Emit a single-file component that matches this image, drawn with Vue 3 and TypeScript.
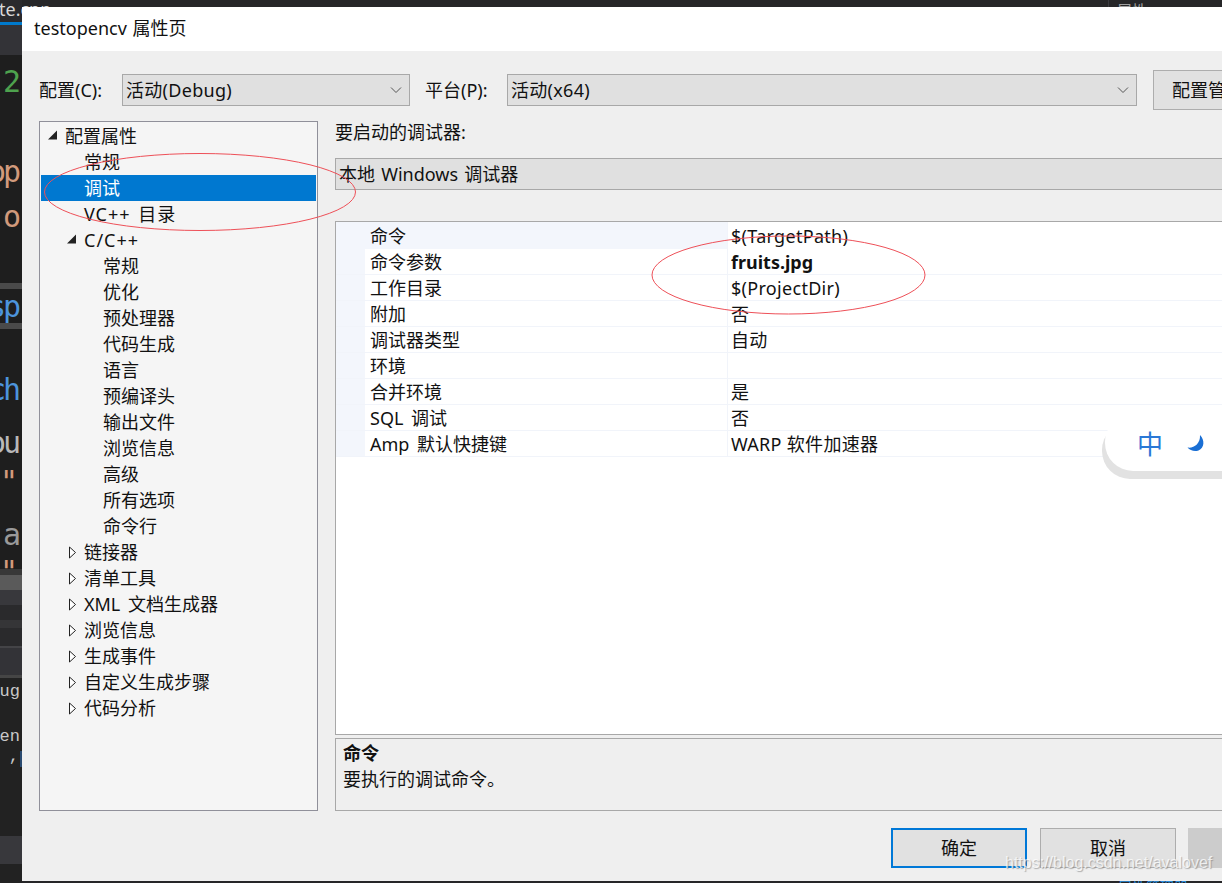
<script setup lang="ts">
type TreeItem = { label: string; depth: 0 | 1 | 2; arrow?: 'open' | 'closed'; selected?: boolean }
type GridRow = { name: string; value: string; bold?: boolean }
type Band = { h: number; bg: string; text?: string; color?: string; cls?: string }

const tree: TreeItem[] = [
  { label: '配置属性', depth: 0, arrow: 'open' },
  { label: '常规', depth: 1 },
  { label: '调试', depth: 1, selected: true },
  { label: 'VC++ 目录', depth: 1 },
  { label: 'C/C++', depth: 1, arrow: 'open' },
  { label: '常规', depth: 2 },
  { label: '优化', depth: 2 },
  { label: '预处理器', depth: 2 },
  { label: '代码生成', depth: 2 },
  { label: '语言', depth: 2 },
  { label: '预编译头', depth: 2 },
  { label: '输出文件', depth: 2 },
  { label: '浏览信息', depth: 2 },
  { label: '高级', depth: 2 },
  { label: '所有选项', depth: 2 },
  { label: '命令行', depth: 2 },
  { label: '链接器', depth: 1, arrow: 'closed' },
  { label: '清单工具', depth: 1, arrow: 'closed' },
  { label: 'XML 文档生成器', depth: 1, arrow: 'closed' },
  { label: '浏览信息', depth: 1, arrow: 'closed' },
  { label: '生成事件', depth: 1, arrow: 'closed' },
  { label: '自定义生成步骤', depth: 1, arrow: 'closed' },
  { label: '代码分析', depth: 1, arrow: 'closed' },
]

const rows: GridRow[] = [
  { name: '命令', value: '$(TargetPath)' },
  { name: '命令参数', value: 'fruits.jpg', bold: true },
  { name: '工作目录', value: '$(ProjectDir)' },
  { name: '附加', value: '否' },
  { name: '调试器类型', value: '自动' },
  { name: '环境', value: '' },
  { name: '合并环境', value: '是' },
  { name: 'SQL 调试', value: '否' },
  { name: 'Amp 默认快捷键', value: 'WARP 软件加速器' },
]

const dark = '#1e1e1e'
const low = '#222222'
const orange = '#d19a7c'
const blue = '#4d94dc'

// strip of the editor window that shows left of the dialog
const bands: Band[] = [
  { h: 22, bg: '#2a2a2d' },
  { h: 3, bg: '#007acc' },
  { h: 30, bg: '#333337' },
  { h: 13, bg: dark },
  { h: 30, bg: dark, text: '2', color: '#4ea24e', cls: 'big' },
  { h: 60, bg: dark },
  { h: 30, bg: dark, text: 'op', color: orange, cls: 'big' },
  { h: 15, bg: dark },
  { h: 30, bg: dark, text: 'o', color: orange, cls: 'big' },
  { h: 50, bg: dark },
  { h: 6, bg: '#4a4a4a' },
  { h: 4, bg: dark },
  { h: 30, bg: dark, text: 'sp', color: blue, cls: 'big' },
  { h: 6, bg: '#4a4a4a' },
  { h: 47, bg: dark },
  { h: 30, bg: dark, text: 'ch', color: blue, cls: 'big' },
  { h: 23, bg: dark },
  { h: 30, bg: dark, text: 'ou', color: '#b9b9b9', cls: 'big' },
  { h: 9, bg: dark },
  { h: 30, bg: dark, text: '"', color: orange, cls: 'big quote' },
  { h: 23, bg: dark },
  { h: 30, bg: dark, text: 'a', color: '#9a9a9a', cls: 'big' },
  { h: 7, bg: dark },
  { h: 11, bg: dark, text: '"', color: orange, cls: 'big quote' },
  { h: 6, bg: '#383838' },
  { h: 15, bg: '#5a5a5a' },
  { h: 15, bg: '#38383c' },
  { h: 15, bg: '#2a2a2c' },
  { h: 8, bg: '#353537' },
  { h: 18, bg: '#2a2a2c' },
  { h: 2, bg: '#444447' },
  { h: 27, bg: '#333337' },
  { h: 3, bg: '#454545' },
  { h: 3, bg: low },
  { h: 22, bg: low, text: 'oug', color: '#c8c8c8', cls: 'small' },
  { h: 23, bg: low },
  { h: 22, bg: low, text: 'pen', color: '#c8c8c8', cls: 'small' },
  { h: 3, bg: low },
  { h: 16, bg: low, text: ',', color: '#c8c8c8', cls: 'small comma' },
  { h: 69, bg: low },
  { h: 28, bg: '#38383c' },
  { h: 19, bg: low },
]
</script>

<template>
  <div class="desktop">
    <!-- editor window behind the dialog -->
    <div class="top-tab">te.cpp</div>
    <div class="top-right">属性</div>
    <div class="strip">
      <div v-for="(b, i) in bands" :key="i" class="band" :class="b.cls" :style="{ height: b.h + 'px', background: b.bg, color: b.color }">
        <span v-if="b.text">{{ b.text }}</span>
      </div>
    </div>

    <div class="dialog">
      <div class="title">testopencv 属性页</div>
      <div class="toolbar">
        <span class="lbl lbl-config">配置(C):</span>
        <div class="select select-config">
          <span>活动(Debug)</span>
          <svg class="chev" width="12" height="8" viewBox="0 0 12 8"><path d="M1 1.5 6 6.5 11 1.5" fill="none" stroke="#555" stroke-width="1" /></svg>
        </div>
        <span class="lbl lbl-platform">平台(P):</span>
        <div class="select select-platform">
          <span>活动(x64)</span>
          <svg class="chev" width="12" height="8" viewBox="0 0 12 8"><path d="M1 1.5 6 6.5 11 1.5" fill="none" stroke="#555" stroke-width="1" /></svg>
        </div>
        <div class="btn btn-manager">配置管理器(O)...</div>
      </div>

      <div class="main">
        <div class="tree">
          <div v-for="(t, i) in tree" :key="i" class="node" :class="['depth-' + t.depth, { selected: t.selected, plus: t.label.includes('++') }]">
            <span class="twist">
              <svg v-if="t.arrow === 'open'" width="10" height="10" viewBox="0 0 10 10"><polygon points="0,9.5 9,9.5 9,0.5" fill="#222" /></svg>
              <svg v-else-if="t.arrow === 'closed'" class="closed" width="10" height="13" viewBox="0 0 10 13"><polygon points="2.5,1 8.5,6.5 2.5,12" fill="#fff" stroke="#222" stroke-width="1" /></svg>
            </span>
            <span>{{ t.label }}</span>
          </div>
        </div>

        <div class="pane">
          <div class="pane-label">要启动的调试器:</div>
          <div class="select combo"><span>本地 Windows 调试器</span></div>
          <div class="grid">
            <div v-for="(r, i) in rows" :key="i" class="row" :class="{ current: i === 0 }">
              <div class="gutter"></div>
              <div class="name">{{ r.name }}</div>
              <div class="value" :class="{ bold: r.bold }">{{ r.value }}</div>
            </div>
          </div>
          <div class="desc">
            <div class="desc-line desc-title">命令</div>
            <div class="desc-line">要执行的调试命令。</div>
          </div>
        </div>
      </div>

      <div class="footer">
        <div class="btn btn-ok">确定</div>
        <div class="btn btn-cancel">取消</div>
        <div class="btn btn-apply"></div>
      </div>
    </div>

    <!-- hand-drawn marks on top of the screenshot -->
    <svg class="marks" width="1222" height="883" viewBox="0 0 1222 883">
      <ellipse cx="200" cy="192" rx="155.5" ry="38.5" fill="none" stroke="#ee5058" stroke-width="1" />
      <ellipse cx="788.5" cy="275" rx="136.5" ry="39" fill="none" stroke="#ee5058" stroke-width="1" />
    </svg>

    <div class="ime">
      <span class="ime-zh">中</span>
      <svg width="18" height="17" viewBox="0 0 18 17"><path d="M13 0C18 5 17.5 13 11.5 15.5C7.5 17 3 15.5 0.5 12.5C6.5 13.5 13.5 9 13 0Z" fill="#1a6fd4" /></svg>
    </div>
    <div class="watermark">https://blog.csdn.net/avalovef</div>
    <div class="bottom-frag">属性管理器</div>
  </div>
</template>

<style>
html,
body {
  margin: 0;
  overflow: hidden;
}
</style>

<style scoped>
.desktop {
  position: relative;
  width: 1222px;
  height: 883px;
  overflow: hidden;
  background: #262628;
  font-family: "Noto Sans", "Noto Sans CJK SC", sans-serif;
  font-size: 18px;
  color: #111;
}

.top-tab {
  position: absolute;
  left: -1px;
  top: -4px;
  z-index: 1;
  font-size: 18px;
  line-height: 26px;
  color: #d8d8d8;
}

.top-right {
  position: absolute;
  left: 1108px;
  top: 0;
  height: 7px;
  padding-left: 8px;
  overflow: hidden;
  font-size: 15px;
  line-height: 20px;
  color: #a0a0a0;
  border-left: 1px solid #3a3a40;
}

.strip {
  width: 22px;
  height: 883px;
  overflow: hidden;
}

.band {
  display: flex;
  justify-content: flex-end;
  overflow: hidden;
  white-space: nowrap;
  width: 22px;
  flex: none;
}

.band.big {
  font-family: "DejaVu Sans Mono", monospace;
  font-size: 30px;
  letter-spacing: -3px;
  line-height: 28px;
  padding-right: 4px;
  box-sizing: border-box;
}

.band.quote {
  padding-right: 7px;
}

.band.small {
  font-family: "Liberation Mono", monospace;
  font-size: 17px;
  line-height: 22px;
  padding-right: 2px;
  box-sizing: border-box;
}

.band.comma {
  padding-right: 3px;
  line-height: 12px;
  box-shadow: inset -2px 0 0 #2a4a70;
}

.dialog {
  position: absolute;
  left: 22px;
  top: 7px;
  z-index: 2;
  width: 1200px;
  height: 874px;
  overflow: hidden;
  background: #efefef;
}

.title {
  height: 44px;
  padding-left: 12px;
  background: #fff;
  line-height: 43px;
  word-spacing: 1px;
}

.toolbar {
  display: flex;
  align-items: center;
  height: 40px;
  margin-top: 19px;
  padding-left: 17px;
}

.lbl {
  flex: none;
  white-space: nowrap;
  padding-bottom: 2px;
}

.lbl-config {
  width: 83px;
}

.lbl-platform {
  width: 82px;
  margin-left: 15px;
}

.select {
  display: flex;
  align-items: center;
  justify-content: space-between;
  box-sizing: border-box;
  height: 32px;
  padding: 0 7px 2px 3px;
  border: 1px solid #a8a8a8;
  background: #e0e0e0;
  flex: none;
  letter-spacing: 0.3px;
}

.select-config {
  width: 288px;
}

.select-platform {
  width: 630px;
}

.chev {
  flex: none;
  margin-top: 2px;
}

.btn {
  box-sizing: border-box;
  height: 40px;
  border: 1px solid #adadad;
  background: #e1e1e1;
  line-height: 38px;
  text-align: center;
  flex: none;
}

.btn-manager {
  width: 160px;
  margin-left: 16px;
  text-align: left;
  padding-left: 18px;
  white-space: nowrap;
  overflow: hidden;
}

.main {
  display: flex;
  gap: 17px;
  margin-top: 11px;
  padding-left: 17px;
  height: 690px;
}

.tree {
  box-sizing: border-box;
  width: 279px;
  height: 690px;
  padding: 1px;
  border: 1px solid #90909a;
  background: #f5f5f5;
  flex: none;
}

.node {
  display: flex;
  align-items: center;
  height: 26px;
  line-height: 26px;
  white-space: nowrap;
  word-spacing: 3px;
}

.node.plus {
  letter-spacing: 1px;
  word-spacing: 2px;
}

.depth-0 {
  padding-left: 7px;
}

.depth-1 {
  padding-left: 26px;
}

.depth-2 {
  padding-left: 45px;
}

.node.selected {
  background: #0078d0;
  color: #fff;
}

.twist {
  display: flex;
  align-items: center;
  width: 17px;
  height: 26px;
  flex: none;
}

.twist svg {
  margin-bottom: 3px;
}

.twist svg.closed {
  margin-bottom: 0;
}

.pane {
  display: flex;
  flex-direction: column;
  width: 1000px;
  flex: none;
}

.pane-label {
  height: 37px;
  line-height: 22px;
}

.combo {
  width: 1000px;
  word-spacing: 1.5px;
  letter-spacing: 0;
}

.grid {
  box-sizing: border-box;
  height: 514px;
  margin-top: 31px;
  border: 1px solid #a8a8a8;
  background: #fff;
}

.row {
  display: flex;
  box-sizing: border-box;
  height: 26px;
  line-height: 27px;
  border-bottom: 1px solid #f1f4fa;
}

.row.current {
  height: 27px;
  line-height: 28px;
  border-bottom: none;
}

.gutter {
  width: 29px;
  background: #f3f6fc;
  flex: none;
}

.name {
  width: 363px;
  padding-left: 5px;
  box-sizing: border-box;
  flex: none;
  border-right: 1px solid #f1f4fa;
  word-spacing: 3px;
}

.row.current .name {
  background: #f3f6fc;
}

.value {
  padding-left: 3px;
  letter-spacing: 0.3px;
}

.value.bold {
  font-weight: 700;
  letter-spacing: 0;
}

.desc {
  box-sizing: border-box;
  height: 73px;
  margin-top: 3px;
  padding: 2px 7px;
  border-top: 1px solid #a8a8a8;
  border-bottom: 1px solid #a8a8a8;
  border-left: 1px solid #a8a8a8;
}

.desc-line {
  height: 26px;
  line-height: 24px;
}

.desc-title {
  font-weight: 700;
}

.footer {
  display: flex;
  margin-top: 17px;
  padding-left: 869px;
}

.btn-ok {
  width: 136px;
  border: 2px solid #0078d7;
  line-height: 36px;
}

.btn-cancel {
  width: 136px;
  margin-left: 13px;
}

.btn-apply {
  width: 136px;
  margin-left: 12px;
  background: #cccccc;
  border-color: #cccccc;
}

.marks {
  position: absolute;
  left: 0;
  top: 0;
  z-index: 3;
  pointer-events: none;
}

.ime {
  position: absolute;
  left: 1105px;
  top: 414px;
  z-index: 4;
  display: flex;
  align-items: center;
  box-sizing: border-box;
  width: 150px;
  height: 57px;
  padding-left: 32px;
  gap: 24px;
  border-radius: 28px;
  background: #fff;
  box-shadow: -3px 8px 0 #e2e2e2;
}

.ime-zh {
  font-size: 26px;
  line-height: 57px;
  color: #2a78d6;
  padding-top: 4px;
}

.ime svg {
  margin-top: 1px;
}

.watermark {
  position: absolute;
  left: 1005px;
  top: 853px;
  z-index: 4;
  font-family: "Liberation Sans", sans-serif;
  font-size: 16px;
  line-height: 20px;
  white-space: nowrap;
  color: rgba(255, 255, 255, 0.75);
  text-shadow: 1px 1px 1px rgba(120, 120, 120, 0.55);
}

.bottom-frag {
  position: absolute;
  left: 1118px;
  top: 878px;
  font-size: 14px;
  line-height: 18px;
  color: #2a8bd8;
}
</style>
